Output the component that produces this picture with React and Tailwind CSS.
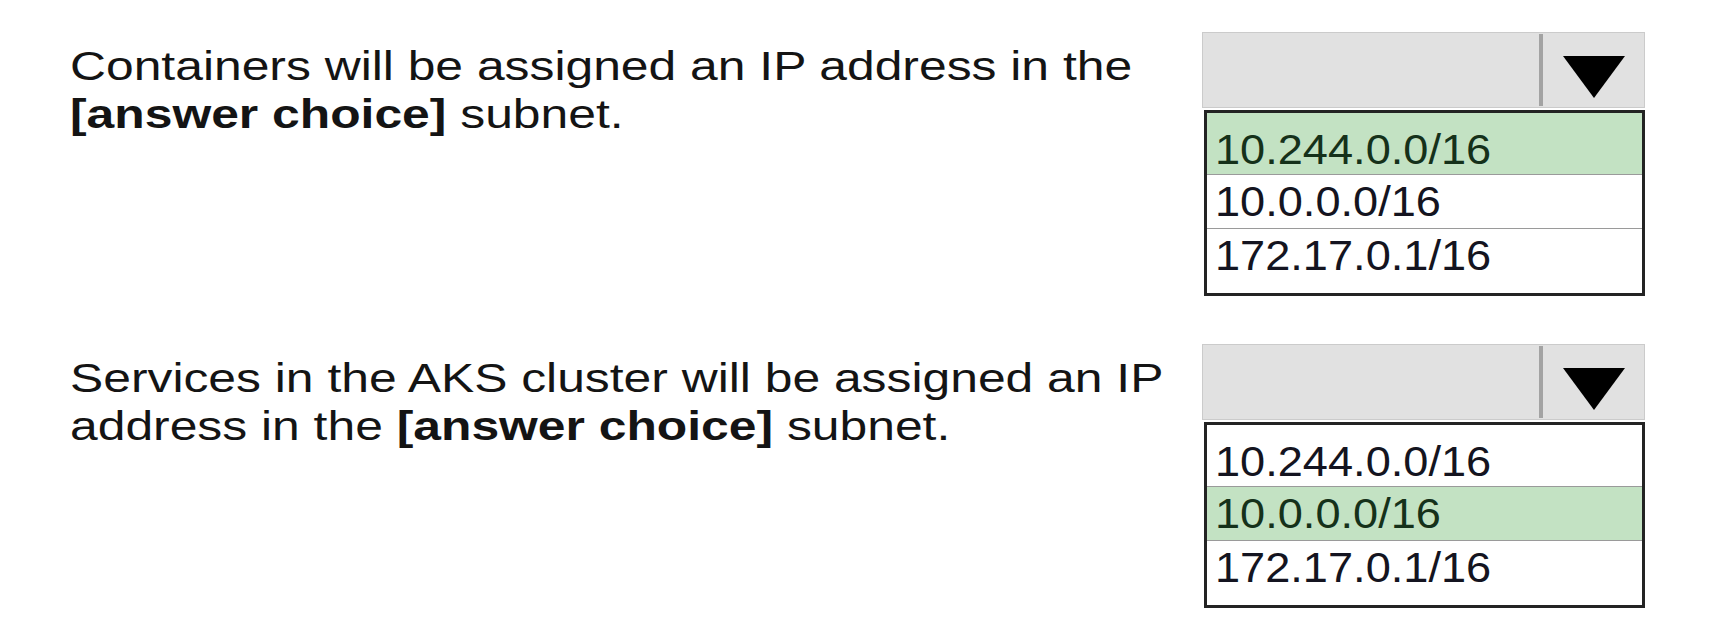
import React from "react";

const questions = [
  {
    id: "containers",
    lines: [
      <>Containers will be assigned an IP address in the</>,
      <>
        <span className="font-bold">[answer choice]</span> subnet.
      </>,
    ],
    selected: 0,
  },
  {
    id: "services",
    lines: [
      <>Services in the AKS cluster will be assigned an IP</>,
      <>
        address in the <span className="font-bold">[answer choice]</span> subnet.
      </>,
    ],
    selected: 1,
  },
];

const options = ["10.244.0.0/16", "10.0.0.0/16", "172.17.0.1/16"];

const rowStyles = [
  "h-[62px] pt-[10px] border-b border-[#9a9a9a]",
  "h-[54px] border-b border-[#9a9a9a]",
  "h-[64px]",
];

function AnswerBox({ selected }) {
  return (
    <div className="w-[443px] flex flex-col">
      <div className="h-[76px] flex border border-[#cbcbcb] bg-[#e1e1e1]">
        <div className="flex-1" />
        <div className="w-[4px] bg-[#a3a3a3] my-[1px]" />
        <div className="w-[101px] flex justify-center pt-[23px]">
          <svg width="62" height="42" viewBox="0 0 62 42">
            <polygon points="0,0 62,0 31,42" fill="#000" />
          </svg>
        </div>
      </div>
      <div className="mt-[2px] ml-[2px] border-[3px] border-[#232323] bg-white flex flex-col">
        {options.map((opt, i) => (
          <div
            key={opt}
            className={`${rowStyles[i]} pl-[8px] ${
              i === selected ? "bg-[#c3e2c3] text-[#15311a]" : "bg-white text-[#141420]"
            }`}
          >
            <div className="text-[43px] leading-[52px] scale-x-[1.05] origin-left">{opt}</div>
          </div>
        ))}
      </div>
    </div>
  );
}

export default function App() {
  return (
    <div
      className="w-[1710px] h-[626px] bg-white flex flex-col gap-[48px] pt-[32px]"
      style={{ fontFamily: '"Liberation Sans", Arial, sans-serif' }}
    >
      {questions.map((q) => (
        <div key={q.id} className="flex items-start">
          <div className="w-[1202px] pl-[70px] pt-[10px] text-[40px] leading-[48px] text-[#141414]">
            {q.lines.map((line, i) => (
              <div key={i} className="scale-x-[1.245] origin-left whitespace-nowrap">
                {line}
              </div>
            ))}
          </div>
          <AnswerBox selected={q.selected} />
        </div>
      ))}
    </div>
  );
}
